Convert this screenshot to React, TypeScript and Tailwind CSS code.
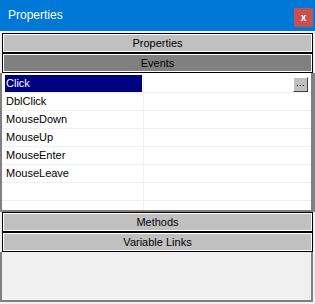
import React from "react";

const sections = ["Properties", "Events", "Methods", "Variable Links"];
const events = ["Click", "DblClick", "MouseDown", "MouseUp", "MouseEnter", "MouseLeave", "", ""];

function SectionHeader({ label, active }: { label: string; active?: boolean }) {
  return (
    <div
      className={`mx-[2px] flex h-[20px] items-center justify-center border border-black text-[11px] leading-none text-black shadow-[inset_0_0_0_1px_#ffffff] ${
        active ? "bg-[#808080]" : "bg-[#c0c0c0]"
      }`}
    >
      {label}
    </div>
  );
}

function EventRow({ name, selected }: { name: string; selected?: boolean }) {
  return (
    <div className="flex h-[18px] border-b border-[#f0f0f0]">
      <div className="w-[142px] shrink-0 border-r border-[#f0f0f0] pl-[3px] pr-[1px]">
        {name && (
          <div
            className={`flex h-full items-center pl-[1px] text-[11px] leading-none ${
              selected ? "bg-[#000080] text-white" : "text-black"
            }`}
          >
            {name}
          </div>
        )}
      </div>
      <div className="flex flex-1 items-start justify-end pr-[3px] pt-[2px]">
        {selected && (
          <div className="flex h-[15px] w-[15px] items-center justify-center gap-[2px] border border-t-white border-l-white border-r-[#404040] border-b-[#404040] bg-[#c0c0c0] pt-[2px]">
            <span className="h-[1px] w-[1px] bg-black" />
            <span className="h-[1px] w-[1px] bg-black" />
            <span className="h-[1px] w-[1px] bg-black" />
          </div>
        )}
      </div>
    </div>
  );
}

export default function App() {
  return (
    <div
      className="flex h-[304px] w-[315px] flex-col overflow-hidden bg-[#f0f0f0]"
      style={{ fontFamily: '"Liberation Sans", Arial, sans-serif' }}
    >
      <div className="flex h-[31px] shrink-0 items-start justify-between bg-[#0078d7] pl-[8px] pr-[2px]">
        <span className="mt-[8px] text-[12px] leading-[14px] text-white">Properties</span>
        <div className="mt-[8px] flex h-[19px] w-[19px] items-center justify-center bg-[#c75050] text-[10px] font-bold leading-none text-white">
          x
        </div>
      </div>

      <div className="flex flex-col pt-[2px]">
        <SectionHeader label={sections[0]} />
        <SectionHeader label={sections[1]} active />

        <div className="h-[139px] overflow-hidden border-b-2 border-l-2 border-r-4 border-[#808080] bg-white pt-[2px]">
          {events.map((name, i) => (
            <EventRow key={i} name={name} selected={i === 0} />
          ))}
        </div>

        <SectionHeader label={sections[2]} />
        <SectionHeader label={sections[3]} />

        <div className="mr-[2px] h-[50px] border-b-2 border-l-2 border-r-2 border-[#808080] bg-[#f0f0f0]" />
      </div>
    </div>
  );
}
